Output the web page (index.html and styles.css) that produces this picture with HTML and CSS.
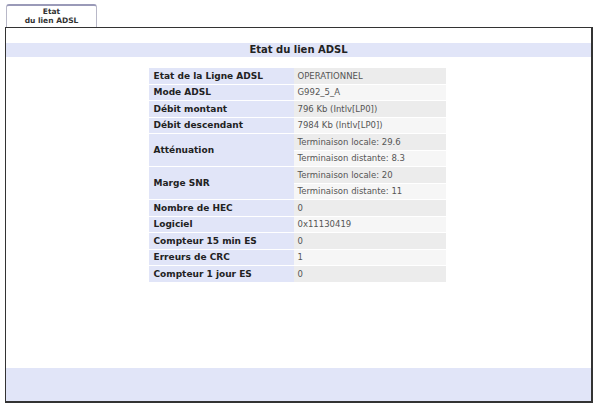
FILE: index.html
```html
<!DOCTYPE html>
<html>
<head>
<meta charset="utf-8">
<link rel="stylesheet" href="styles.css">
</head>
<body>
<div class="tabs">
  <div class="tab">Etat<br>du lien ADSL</div>
</div>
<div class="frame">
  <div class="band title">Etat du lien ADSL</div>
  <table class="info">
    <tr><th>Etat de la Ligne ADSL</th><td class="odd">OPERATIONNEL</td></tr>
    <tr><th>Mode ADSL</th><td class="even">G992_5_A</td></tr>
    <tr><th>Débit montant</th><td class="odd">796 Kb (Intlv[LP0])</td></tr>
    <tr><th>Débit descendant</th><td class="even">7984 Kb (Intlv[LP0])</td></tr>
    <tr><th rowspan="2">Atténuation</th><td class="odd">Terminaison locale: 29.6</td></tr>
    <tr><td class="even">Terminaison distante: 8.3</td></tr>
    <tr><th rowspan="2">Marge SNR</th><td class="odd">Terminaison locale: 20</td></tr>
    <tr><td class="even">Terminaison distante: 11</td></tr>
    <tr><th>Nombre de HEC</th><td class="odd">0</td></tr>
    <tr><th>Logiciel</th><td class="even">0x11130419</td></tr>
    <tr><th>Compteur 15 min ES</th><td class="odd">0</td></tr>
    <tr><th>Erreurs de CRC</th><td class="even">1</td></tr>
    <tr><th>Compteur 1 jour ES</th><td class="odd">0</td></tr>
  </table>
  <div class="band footer"></div>
</div>
</body>
</html>
```
FILE: styles.css
```css
html, body {
  margin: 0;
  padding: 0;
  background: #ffffff;
  font-family: "DejaVu Sans", Verdana, sans-serif;
}
.tabs {
  display: flex;
  padding: 4px 0 0 6px;
  height: 27px;
  box-sizing: border-box;
}
.tab {
  width: 91px;
  box-sizing: border-box;
  border: 1px solid #b8b8c8;
  border-top: 2px solid #9a9ab8;
  border-bottom: none;
  border-radius: 3px 3px 0 0;
  text-align: center;
  font-size: 7.5px;
  font-weight: bold;
  line-height: 9px;
  color: #333;
  padding-top: 1px;
}
.frame {
  margin-left: 5px;
  width: 588px;
  height: 376px;
  box-sizing: border-box;
  border: 1px solid #333;
  border-right-width: 2px;
  border-bottom-width: 2px;
  display: flex;
  flex-direction: column;
  align-items: center;
}
.band {
  align-self: stretch;
  background: #e1e5f8;
}
.title {
  margin-top: 15px;
  height: 14px;
  line-height: 14px;
  text-align: center;
  font-weight: bold;
  font-size: 10px;
  color: #222;
}
.info {
  margin-top: 10px;
  margin-right: 3px;
  border-collapse: separate;
  border-spacing: 0 1px;
  width: 297px;
  font-size: 8.5px;
}
.info th {
  width: 140px;
  text-align: left;
  background: #e1e5f8;
  color: #222;
  padding: 0 0 0 5px;
  height: 15.5px;
  font-weight: bold;
  font-size: 9px;
}
.info td {
  padding: 0 0 0 4px;
  color: #555;
  height: 15.5px;
}
.info td.odd { background: #ececec; }
.info td.even { background: #f6f6f6; }
.footer {
  margin-top: auto;
  height: 33px;
}
```
